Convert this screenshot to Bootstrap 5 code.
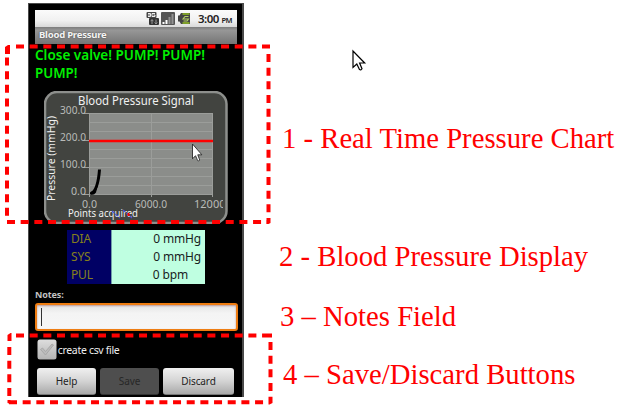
<!DOCTYPE html>
<html lang="en">
<head>
<meta charset="utf-8">
<title>Blood Pressure</title>
<link href="https://cdn.jsdelivr.net/npm/bootstrap@5.3.0/dist/css/bootstrap.min.css" rel="stylesheet">
<style>
body{width:620px;height:408px;overflow:hidden;background:#fff}
.phone{margin:3px 0 0 28px;width:216px;height:394px;background:#000;border:solid #4a4a4a;border-width:1px 2px 0 1px;padding:6px 5px 0 6px;font-family:"Noto Sans","Open Sans",sans-serif;line-height:1}
.status-strip{height:17px;background:linear-gradient(#fbfbfb,#f1f1f1 60%,#d9d9d9);padding-right:5px;color:#333}
.clock{font-size:11.5px;letter-spacing:-.5px;font-weight:600;margin-left:6px;white-space:nowrap;color:#222}
.clock span{font-size:7.5px}
.title-strip{height:17px;background:linear-gradient(#7c7c7c,#979797 20%,#757575);color:#f4f4f4;font-size:9.5px;font-weight:700;letter-spacing:-.22px;padding:0 0 1px 4px;text-shadow:0 0 2px #444}
.message{display:block;fill:#00f000;font-size:14.5px;font-weight:600}
.chart{display:block;margin-left:9px}
.readings{width:138px;margin:6px 0 0 32px;font-size:12px;letter-spacing:-.15px}
.readings .name{width:45px;height:18px;background:#000064;color:#86801c;padding:0 0 0 4px;border-right:1px solid #6f9eaa}
.readings .val{height:18px;background:#bfffe1;color:#18231e;padding:0 4px 0 0}
.bpm{margin-right:13px}
.notes-label{margin-top:6px;height:13px;font-size:9px;font-weight:700;color:#c3c3c3;letter-spacing:-.1px}
.notes-field{width:203px;height:28px;border:2px solid #ee7d12;border-radius:3px;background:linear-gradient(#e4e4e4,#f4f4f4 35%,#f6f6f6);padding:3px 0 0 4px;box-shadow:inset 0 1px 2px #b99}
.caret{width:1px;height:18px;background:#333}
.csv{margin:8px 0 0 2px;height:21px;color:#eee;font-size:10.5px;letter-spacing:-.32px}
.csv span{padding-top:2px}
.actions{margin:8px 0 0 2px}
.actions .btn{height:27px;padding:0;border:0;border-radius:3px;font-size:10px;line-height:26px;color:#222;background:linear-gradient(#f0f0f0,#d4d4d4 50%,#a9a9a9);border-bottom:1px solid #777;letter-spacing:-.1px}
.actions .btn:disabled{background:#4e4e4e;color:#272727;opacity:1;border-color:#333}
.help-btn,.save-btn{width:59px}.discard-btn{width:71px}
.callouts{padding-top:122px;margin-left:35px;font-family:"Liberation Serif",serif;color:#f00;font-size:28.7px;line-height:32px;white-space:nowrap}
.c1{margin-left:3px}.c2{margin-top:86px}.c3{margin:28px 0 0 1px}.c4{margin:26px 0 0 4px}
.over{pointer-events:none}
</style>
</head>
<body>
<div class="position-relative d-flex">
<main class="phone flex-shrink-0">
  <div class="status-strip d-flex align-items-center justify-content-end">
    <svg width="46" height="15" viewBox="0 0 46 15">
      <rect x=".5" y="1" width="10" height="6" rx="1" fill="#454545"/><path d="M2 2.500h2.500v3H2M2 4h2M9 2.500H6v3h3V4H7.500" fill="none" stroke="#fff" stroke-width=".9"/>
      <rect x="3" y="7" width="10" height="7" rx="1" fill="#333"/><path d="M6 13V9M4.700 10.200L6 8.500l1.300 1.700M10 8.500V13M8.700 11.500l1.300 1.500 1.300-1.500" fill="none" stroke="#999" stroke-width="1"/>
      <rect x="15" y="1" width="14" height="13" rx="1" fill="#555"/><path d="M16.500 13v-2h2v2zM19.500 13V9h2v4z" fill="#fff"/><path d="M22.500 13V6h2v7zM25.500 13V3h2v10z" fill="#929292"/>
      <path d="M35 2h9v11h-9l-1.500-2.500H32v-6h1.500z" fill="#444"/><path d="M36.500 3h7M36.500 12h7" stroke="#91bd20" stroke-width="1.300"/><path d="M42.500 5.500H39L37 8h5.500L41 10h-3.500" fill="none" stroke="#b4d265" stroke-width="1.100"/>
    </svg>
    <span class="clock">3:00 <span>PM</span></span>
  </div>
  <div class="title-strip d-flex align-items-center">Blood Pressure</div>
  <svg class="message" width="200" height="47" viewBox="35 44 200 47">
    <text x="35" y="60" textLength="170" lengthAdjust="spacingAndGlyphs">Close valve! PUMP! PUMP!</text>
    <text x="35" y="77.500" textLength="42.500" lengthAdjust="spacingAndGlyphs">PUMP!</text>
  </svg>
  <svg class="chart" width="184" height="133" viewBox="44 91 184 133">
    <rect x="45" y="92" width="181.500" height="131" rx="12" fill="#424440" stroke="#8d8f8c" stroke-width="2.500"/>
    <rect x="89" y="113" width="124" height="82" fill="#8b8d8a"/>
    <path d="M89 113.500h124M89 122.500h124M89 131.500h124M89 149.500h124M89 158.500h124M89 167.500h124M89 176.500h124M89 185.500h124M84 194.500h129M151.500 113v84M212.500 113v84M89.500 113v84M84 113.500h5M84 140.500h5M84 167.500h5" stroke="#9b9d9a" fill="none"/>
    <path d="M89 141h124" stroke="#f00" stroke-width="2.400"/>
    <path d="M91 193.500q7-3 8.500-24" stroke="#000" stroke-width="3" fill="none"/><path d="M90 194.500v-2l4-2 4-6-2 8-2 2z"/>
    <g font-size="11" fill="#b9bbb8">
      <text x="60" y="113.500" textLength="26" lengthAdjust="spacingAndGlyphs">300.0</text>
      <text x="60" y="141" textLength="26" lengthAdjust="spacingAndGlyphs">200.0</text>
      <text x="60" y="168" textLength="26" lengthAdjust="spacingAndGlyphs">100.0</text>
      <text x="71" y="195" textLength="15" lengthAdjust="spacingAndGlyphs">0.0</text>
      <text x="82" y="208" textLength="15" lengthAdjust="spacingAndGlyphs">0.0</text>
      <text x="135" y="208" textLength="32" lengthAdjust="spacingAndGlyphs">6000.0</text>
      <svg x="190" y="195" width="33" height="18" viewBox="190 195 33 18"><text x="194" y="208" textLength="31.500" lengthAdjust="spacingAndGlyphs">12000</text></svg>
    </g>
    <g fill="#f0f0f0">
      <text x="78" y="105" font-size="12" textLength="116" lengthAdjust="spacingAndGlyphs">Blood Pressure Signal</text>
      <text x="68" y="217" font-size="10" textLength="70" lengthAdjust="spacingAndGlyphs">Points acquired</text>
      <text transform="translate(55 201) rotate(-90)" font-size="10.500" textLength="85" lengthAdjust="spacingAndGlyphs">Pressure (mmHg)</text>
    </g>
    <path d="M112 211l8 7M123 210l9 8" stroke="#4a50d8" stroke-width="1.300" stroke-dasharray="3 1.500"/><rect x="127.500" y="213" width="2" height="3" fill="#f00"/>
  </svg>
  <div class="readings">
    <div class="d-flex"><div class="name d-flex align-items-center">DIA</div><div class="val flex-fill d-flex align-items-center justify-content-end">0 mmHg</div></div>
    <div class="d-flex"><div class="name d-flex align-items-center">SYS</div><div class="val flex-fill d-flex align-items-center justify-content-end">0 mmHg</div></div>
    <div class="d-flex"><div class="name d-flex align-items-center">PUL</div><div class="val flex-fill d-flex align-items-center justify-content-end"><span class="bpm">0 bpm</span></div></div>
  </div>
  <div class="notes-label">Notes:</div>
  <div class="notes-field"><div class="caret"></div></div>
  <div class="csv d-flex align-items-center">
    <svg width="20" height="21" viewBox="0 0 20 21"><defs><linearGradient id="box" x2="0" y2="1"><stop stop-color="#dedede"/><stop offset="1" stop-color="#b4b4b4"/></linearGradient></defs><rect x=".5" y=".5" width="19" height="20" rx="2.500" fill="url(#box)"/><path d="M3.500 10.500l2-1.500 3 3.500 6.500-7.500 1.500 1L8.500 16z" fill="#bbb" stroke="#a2a2a2" stroke-width=".8"/></svg>
    <span>&#8202;create csv file</span>
  </div>
  <div class="actions d-flex gap-1">
    <button class="btn help-btn">Help</button>
    <button class="btn save-btn" disabled>Save</button>
    <button class="btn discard-btn">Discard</button>
  </div>
</main>
<aside class="callouts">
  <div class="c1">1 - Real Time Pressure Chart</div>
  <div class="c2">2 - Blood Pressure Display</div>
  <div class="c3">3 – Notes Field</div>
  <div class="c4">4 – Save/Discard Buttons</div>
</aside>
<svg class="over position-absolute top-0 start-0" width="620" height="408" viewBox="0 0 620 408">
  <defs><path id="cur" d="M0 0v16.500l3.800-3.500 2.700 5.500q1.500 1 2.500-.7L6.600 12h5.100z"/></defs>
  <g stroke="#f00" stroke-width="4" fill="none" stroke-dasharray="8 5.670">
    <path d="M16 46.500H262"/><path d="M7 222H267"/><path d="M7 57.500V218"/><path d="M268.500 54V218"/>
    <path d="M16 335.500H264"/><path d="M9 402.300H268"/><path d="M9.300 347V398"/><path d="M270.500 342V397"/>
  </g>
  <path d="M5 54v-7l3-2h2v9zM262 44.500h8v4h-8zM266.500 218h4v5l-2 1h-2zM7.500 341v-6l3-2h1v8zM7.500 400h3v4l-3-1zM264 333.500h8v4h-8zM268.500 397h4v6l-3 1.500h-1z" fill="#f00"/>
  <use href="#cur" x="353" y="51" fill="#fff" stroke="#000" stroke-width="1.200"/>
  <use href="#cur" transform="translate(192.500 144) scale(.8 .9)" fill="#fff" stroke="#222" stroke-width="1"/>
</svg>
</div>
<script src="https://cdn.jsdelivr.net/npm/bootstrap@5.3.0/dist/js/bootstrap.bundle.min.js"></script>
</body>
</html>
